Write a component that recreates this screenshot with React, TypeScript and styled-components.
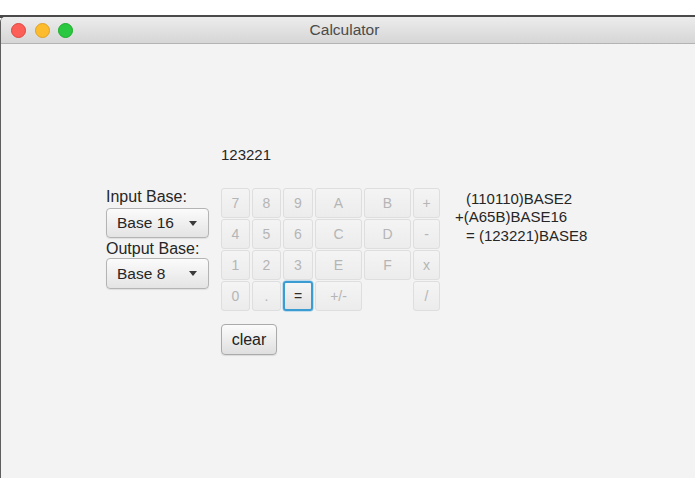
import React from 'react';
import styled, { createGlobalStyle } from 'styled-components';

const GlobalStyle = createGlobalStyle`
html, body {
  margin: 0;
  padding: 0;
  background: #ffffff;
}
body {
  font-family: "Liberation Sans", Arial, sans-serif;
}`;

const Page = styled.div`
width: 695px;
height: 494px;
overflow: hidden;
padding-top: 17px;
box-sizing: border-box;
background: linear-gradient(#ffffff 0, #ffffff 15px, #4a4a4a 15px, #4a4a4a 18px, #ffffff 18px);`;

const Window = styled.div`
height: 461px;
width: 720px;
background: #f3f3f3;
border-left: 1px solid #5e5e5e;
border-radius: 5px 5px 0 0;
overflow: hidden;
display: flex;
flex-direction: column;`;

const TitleBar = styled.div`
height: 26px;
flex: none;
display: grid;
grid-template-columns: 1fr auto 1fr;
align-items: center;
background: linear-gradient(#ececec, #d6d6d6);
border-bottom: 1px solid #b3b3b3;
width: 695px;`;

const Lights = styled.div`
display: flex;
gap: 8.5px;
padding-left: 10px;`;

const Light = styled.span<{ $fill: string; $edge: string }>`
width: 13px;
height: 13px;
border-radius: 50%;
background: ${(p) => p.$fill};
border: 0.5px solid ${(p) => p.$edge};`;

const Title = styled.div`
font-size: 15.5px;
color: #4b4b4b;
transform: translateX(-4px);`;

const Content = styled.div`
padding: 102px 0 0 105px;
display: flex;
flex-direction: column;`;

const Display = styled.div`
font-size: 15px;
line-height: 18px;
height: 18px;
color: #262626;
margin-left: 115px;
margin-bottom: 24px;`;

const Main = styled.div`
display: flex;
align-items: flex-start;`;

const Side = styled.div`
width: 103px;
display: flex;
flex-direction: column;
margin-right: 12px;`;

const FieldLabel = styled.div<{ $gap: number }>`
font-size: 16px;
line-height: 18px;
color: #262626;
margin-top: ${(p) => p.$gap}px;`;

const Select = styled.div<{ $tall?: boolean; $gap: number }>`
height: ${(p) => (p.$tall ? 29 : 28)}px;
margin-top: ${(p) => p.$gap}px;
border: 1px solid #b4b4b4;
border-radius: 4px;
background: linear-gradient(#fbfbfb, #e4e4e4);
box-shadow: 0 1px 1px rgba(0, 0, 0, 0.08);
display: flex;
align-items: center;
justify-content: space-between;
padding: 0 11px 0 10px;
font-size: 15.5px;
color: #262626;`;

const Caret = styled.span`
width: 0;
height: 0;
border-left: 4.5px solid transparent;
border-right: 4.5px solid transparent;
border-top: 5px solid #3a3a3a;`;

const Middle = styled.div`
display: flex;
flex-direction: column;
align-items: flex-start;`;

const Keypad = styled.div`
display: grid;
grid-template-columns: 29px 29px 30px 47px 47px 27px;
grid-auto-rows: 30px;
column-gap: 2px;
row-gap: 1px;`;

const Key = styled.button<{ $focus?: boolean }>`
margin: 0;
padding: 0;
font-family: inherit;
font-size: 14px;
border-radius: 3px;
display: flex;
align-items: center;
justify-content: center;
color: ${(p) => (p.$focus ? '#2e2e2e' : '#b5b5b5')};
background: ${(p) =>
  p.$focus ? 'linear-gradient(#f6f6f6, #e2e2e2)' : 'linear-gradient(#f4f4f4, #ececec)'};
border: ${(p) => (p.$focus ? '2px solid #3b9bd3' : '1px solid #dedede')};
box-shadow: ${(p) => (p.$focus ? '0 0 0 0.5px #8cc4e6' : 'none')};`;

const Gap = styled.span``;

const ClearButton = styled.button`
margin-top: 13px;
width: 56px;
height: 31px;
padding: 0;
font-family: inherit;
font-size: 16px;
color: #222222;
border: 1px solid #aaaaaa;
border-radius: 4px;
background: linear-gradient(#fbfbfb, #dfdfdf);
box-shadow: 0 1px 1px rgba(0, 0, 0, 0.1);`;

const Result = styled.div`
margin-left: 15px;
margin-top: 2px;
display: flex;
flex-direction: column;
font-size: 15px;
line-height: 18.3px;
color: #262626;`;

const ResultLine = styled.span<{ $indent: number }>`
padding-left: ${(p) => p.$indent}px;
white-space: pre;`;

const keys: (string | null)[] = [
  '7', '8', '9', 'A', 'B', '+',
  '4', '5', '6', 'C', 'D', '-',
  '1', '2', '3', 'E', 'F', 'x',
  '0', '.', '=', '+/-', null, '/',
];

export default function App(): JSX.Element {
  return (
    <Page>
      <GlobalStyle />
      <Window>
        <TitleBar>
          <Lights>
            <Light $fill='#fc5f57' $edge='#e0443e' />
            <Light $fill='#fdbc2e' $edge='#dea123' />
            <Light $fill='#2ac840' $edge='#1aab29' />
          </Lights>
          <Title>Calculator</Title>
          <div />
        </TitleBar>
        <Content>
          <Display>123221</Display>
          <Main>
            <Side>
              <FieldLabel $gap={0}>Input Base:</FieldLabel>
              <Select $gap={2}>
                Base 16
                <Caret />
              </Select>
              <FieldLabel $gap={2}>Output Base:</FieldLabel>
              <Select $gap={0} $tall>
                Base 8
                <Caret />
              </Select>
            </Side>
            <Middle>
              <Keypad>
                {keys.map((k, i) =>
                  k === null ? (
                    <Gap key={i} />
                  ) : k === '=' ? (
                    <Key key={i} $focus>{k}</Key>
                  ) : (
                    <Key key={i} disabled>{k}</Key>
                  )
                )}
              </Keypad>
              <ClearButton>clear</ClearButton>
            </Middle>
            <Result>
              <ResultLine $indent={11}>(110110)BASE2</ResultLine>
              <ResultLine $indent={0}>+(A65B)BASE16</ResultLine>
              <ResultLine $indent={11}>= (123221)BASE8</ResultLine>
            </Result>
          </Main>
        </Content>
      </Window>
    </Page>
  );
}
